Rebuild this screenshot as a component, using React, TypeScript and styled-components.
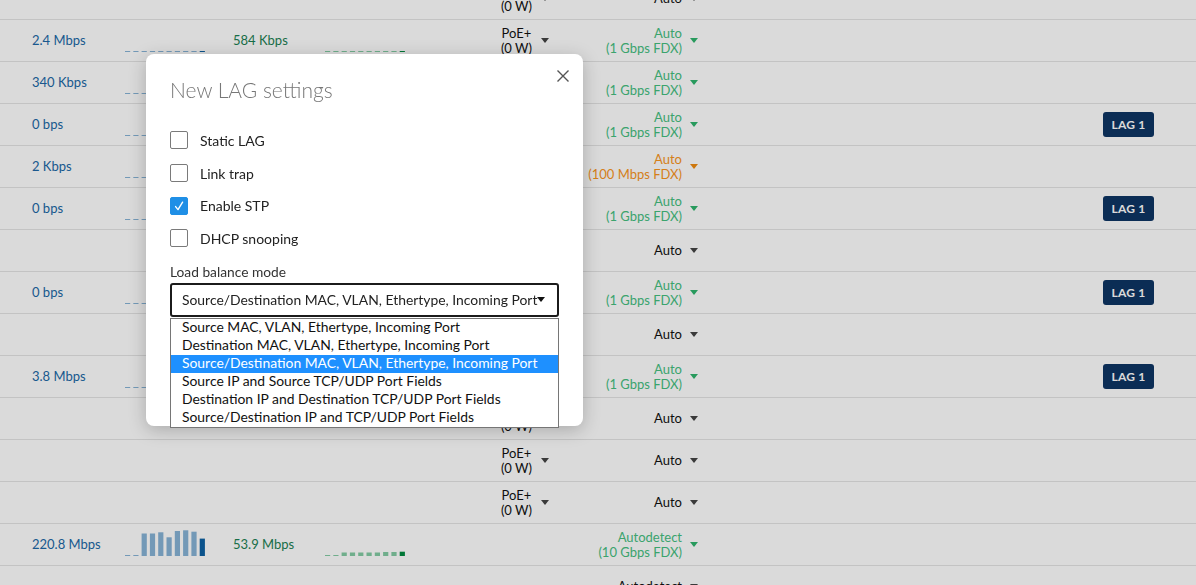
import React from "react";
import styled, { createGlobalStyle } from "styled-components";

const GlobalStyle = createGlobalStyle`
  html, body {
    margin: 0;
    padding: 0;
    background: #ffffff;
    overflow: hidden;
    font-family: "Lato", "Noto Sans", sans-serif;
  }
  * { box-sizing: border-box; }
`;

type Tone = "green" | "orange" | "plain";

interface PortRow {
  rx?: string;
  tx?: string;
  rxSpark?: number[];
  txSpark?: number[];
  poe?: boolean;
  speed: string;
  detail?: string;
  tone: Tone;
  lag?: boolean;
}

const flat = [1, 1, 1, 1, 1, 1, 1, 1, 1, 1];

const rows: PortRow[] = [
  { poe: true, speed: "Auto", tone: "plain" },
  { rx: "2.4 Mbps", rxSpark: flat, tx: "584 Kbps", txSpark: flat, poe: true, speed: "Auto", detail: "(1 Gbps FDX)", tone: "green" },
  { rx: "340 Kbps", rxSpark: flat, tx: "112 Kbps", txSpark: flat, poe: true, speed: "Auto", detail: "(1 Gbps FDX)", tone: "green" },
  { rx: "0 bps", rxSpark: flat, tx: "0 bps", txSpark: flat, poe: true, speed: "Auto", detail: "(1 Gbps FDX)", tone: "green", lag: true },
  { rx: "2 Kbps", rxSpark: flat, tx: "1 Kbps", txSpark: flat, poe: true, speed: "Auto", detail: "(100 Mbps FDX)", tone: "orange" },
  { rx: "0 bps", rxSpark: flat, tx: "0 bps", txSpark: flat, poe: true, speed: "Auto", detail: "(1 Gbps FDX)", tone: "green", lag: true },
  { poe: true, speed: "Auto", tone: "plain" },
  { rx: "0 bps", rxSpark: flat, tx: "0 bps", txSpark: flat, poe: true, speed: "Auto", detail: "(1 Gbps FDX)", tone: "green", lag: true },
  { poe: true, speed: "Auto", tone: "plain" },
  { rx: "3.8 Mbps", rxSpark: flat, tx: "1.2 Mbps", txSpark: flat, poe: true, speed: "Auto", detail: "(1 Gbps FDX)", tone: "green", lag: true },
  { poe: true, speed: "Auto", tone: "plain" },
  { poe: true, speed: "Auto", tone: "plain" },
  { poe: true, speed: "Auto", tone: "plain" },
  {
    rx: "220.8 Mbps",
    rxSpark: [1, 1, 22.5, 22.5, 23.7, 18.7, 25, 25.7, 24.3, 17.4],
    tx: "53.9 Mbps",
    txSpark: [1, 1, 3.5, 3.5, 3.5, 3.5, 3.5, 4, 4, 4.3],
    speed: "Autodetect",
    detail: "(10 Gbps FDX)",
    tone: "green",
  },
  { speed: "Autodetect", tone: "plain" },
];

const modes = [
  "Source MAC, VLAN, Ethertype, Incoming Port",
  "Destination MAC, VLAN, Ethertype, Incoming Port",
  "Source/Destination MAC, VLAN, Ethertype, Incoming Port",
  "Source IP and Source TCP/UDP Port Fields",
  "Destination IP and Destination TCP/UDP Port Fields",
  "Source/Destination IP and TCP/UDP Port Fields",
];

const toneColor: Record<Tone, string> = {
  green: "#45c07f",
  orange: "#f9951d",
  plain: "#111111",
};

const arrowColor: Record<Tone, string> = {
  green: "#2fb56d",
  orange: "#f08c10",
  plain: "#444444",
};

const Table = styled.div`
  margin-top: -22px;
  display: flex;
  flex-direction: column;
  font-size: 13px;
`;

const Row = styled.div`
  display: grid;
  grid-template-columns: 93px 108px 92px 80px 144px 149px 1fr;
  align-items: center;
  height: 42px;
  padding-left: 32px;
  border-bottom: 1px solid #e5e5e5;
`;

const Rate = styled.div<{ $kind: "rx" | "tx" }>`
  font-size: 13px;
  line-height: 16px;
  margin-top: -2px;
  color: ${({ $kind }) => ($kind === "rx" ? "#2068a6" : "#1b8154")};
`;

const SparkCell = styled.div`
  align-self: end;
  margin-bottom: 9px;
  height: 28px;
  line-height: 0;
`;

const PoeCell = styled.div`
  display: flex;
  align-items: center;
  justify-content: flex-end;
  gap: 9px;
`;

const PoeText = styled.div`
  font-size: 13px;
  line-height: 15px;
  color: #111;
  text-align: center;
`;

const SpeedCell = styled.div`
  display: flex;
  align-items: center;
  justify-content: flex-end;
  gap: 8px;
`;

const SpeedText = styled.div<{ $tone: Tone }>`
  font-size: 13px;
  line-height: 15px;
  text-align: right;
  color: ${({ $tone }) => toneColor[$tone]};
`;

const Caret = styled.span<{ $color: string }>`
  flex: none;
  width: 0;
  height: 0;
  border-left: 4px solid transparent;
  border-right: 4px solid transparent;
  border-top: 5px solid ${({ $color }) => $color};
`;

const LagCell = styled.div`
  display: flex;
  justify-content: flex-end;
  padding-right: 42px;
`;

const LagBadge = styled.span`
  display: inline-flex;
  align-items: center;
  justify-content: center;
  width: 51px;
  height: 25px;
  border-radius: 3px;
  background: #0e3564;
  color: #ffffff;
  font-size: 12px;
  font-weight: 700;
  letter-spacing: 0.2px;
`;

const Backdrop = styled.div`
  position: fixed;
  inset: 0;
  background: rgba(0, 0, 0, 0.145);
  z-index: 10;
`;

const Modal = styled.div`
  position: fixed;
  left: 146px;
  top: 54px;
  width: 437px;
  height: 372px;
  padding: 23px 24px 0 24px;
  background: #ffffff;
  border-radius: 8px;
  box-shadow: 0 4px 18px rgba(0, 0, 0, 0.22);
  z-index: 20;
  display: flex;
  flex-direction: column;
`;

const Close = styled.button`
  position: absolute;
  top: 16px;
  right: 14px;
  width: 12px;
  height: 12px;
  padding: 0;
  border: none;
  background: none;
  cursor: pointer;
  display: flex;
`;

const Title = styled.h2`
  margin: 0 0 22px 0;
  font-size: 21px;
  line-height: 25px;
  font-weight: 300;
  color: #777777;
`;

const CheckList = styled.div`
  display: flex;
  flex-direction: column;
`;

const CheckRow = styled.label`
  display: flex;
  align-items: center;
  gap: 12px;
  height: 32.7px;
  font-size: 14px;
  color: #222;
`;

const Box = styled.span<{ $checked: boolean }>`
  width: 18px;
  height: 18px;
  border-radius: 2px;
  border: 1px solid ${({ $checked }) => ($checked ? "#1f8fe6" : "#7a7a7a")};
  background: ${({ $checked }) => ($checked ? "#1f8fe6" : "#ffffff")};
  display: flex;
  align-items: center;
  justify-content: center;
`;

const FieldLabel = styled.div`
  margin-top: 9px;
  font-size: 13.75px;
  line-height: 16px;
  color: #333;
`;

const SelectWrap = styled.div`
  position: relative;
  margin-top: 3px;
  width: 389px;
`;

const SelectBox = styled.div`
  height: 34px;
  border: 2px solid #1b1b1b;
  border-radius: 3px;
  padding: 0 12px 0 10px;
  display: flex;
  align-items: center;
  justify-content: space-between;
  font-size: 13.9px;
  color: #222;
  white-space: nowrap;
`;

const SelectCaret = styled.span`
  width: 0;
  height: 0;
  border-left: 4px solid transparent;
  border-right: 4px solid transparent;
  border-top: 5px solid #111;
`;

const Dropdown = styled.ul`
  position: absolute;
  top: calc(100% + 1px);
  left: 0;
  width: 389px;
  margin: 0;
  padding: 0;
  list-style: none;
  background: #ffffff;
  border: 1px solid #767676;
`;

const Option = styled.li<{ $selected: boolean }>`
  height: 18px;
  line-height: 16px;
  padding-left: 11px;
  font-size: 13.9px;
  white-space: nowrap;
  color: ${({ $selected }) => ($selected ? "#ffffff" : "#111")};
  background: ${({ $selected }) => ($selected ? "#1e90ff" : "transparent")};
`;

const Spark = ({ values, light, dark }: { values: number[]; light: string; dark: string }) => (
  <svg width="80" height="28" viewBox="0 0 80 28">
    {values.map((v, i) => (
      <rect
        key={i}
        x={i * 8.3}
        y={28 - v}
        width={5.2}
        height={v}
        fill={i === values.length - 1 ? dark : light}
      />
    ))}
  </svg>
);

const CheckMark = () => (
  <svg width="14" height="14" viewBox="0 0 14 14">
    <path d="M3.6 7.6 L6 10.6 L10.6 3.2" fill="none" stroke="#fff" strokeWidth="1.4" strokeLinecap="round" strokeLinejoin="round" />
  </svg>
);

const options = [
  { label: "Static LAG", checked: false },
  { label: "Link trap", checked: false },
  { label: "Enable STP", checked: true },
  { label: "DHCP snooping", checked: false },
];

export default function App() {
  return (
    <>
      <GlobalStyle />
      <Table>
        {rows.map((r, i) => (
          <Row key={i}>
            <div>{r.rx && <Rate $kind="rx">{r.rx}</Rate>}</div>
            <SparkCell>{r.rxSpark && <Spark values={r.rxSpark} light="#87b3d6" dark="#0d62a4" />}</SparkCell>
            <div>{r.tx && <Rate $kind="tx">{r.tx}</Rate>}</div>
            <SparkCell>{r.txSpark && <Spark values={r.txSpark} light="#84cca4" dark="#008a40" />}</SparkCell>
            <PoeCell>
              {r.poe && (
                <>
                  <PoeText>
                    PoE+
                    <br />
                    (0 W)
                  </PoeText>
                  <Caret $color="#444" />
                </>
              )}
            </PoeCell>
            <SpeedCell>
              <SpeedText $tone={r.tone}>
                {r.speed}
                {r.detail && (
                  <>
                    <br />
                    {r.detail}
                  </>
                )}
              </SpeedText>
              <Caret $color={arrowColor[r.tone]} />
            </SpeedCell>
            <LagCell>{r.lag && <LagBadge>LAG 1</LagBadge>}</LagCell>
          </Row>
        ))}
      </Table>
      <Backdrop />
      <Modal>
        <Close aria-label="Close">
          <svg width="12" height="12" viewBox="0 0 12 12">
            <path d="M0.5 0.5 L11.5 11.5 M11.5 0.5 L0.5 11.5" stroke="#555" strokeWidth="1.4" />
          </svg>
        </Close>
        <Title>New LAG settings</Title>
        <CheckList>
          {options.map((o) => (
            <CheckRow key={o.label}>
              <Box $checked={o.checked}>{o.checked && <CheckMark />}</Box>
              {o.label}
            </CheckRow>
          ))}
        </CheckList>
        <FieldLabel>Load balance mode</FieldLabel>
        <SelectWrap>
          <SelectBox>
            <span>{modes[2]}</span>
            <SelectCaret />
          </SelectBox>
          <Dropdown>
            {modes.map((m, i) => (
              <Option key={m} $selected={i === 2}>
                {m}
              </Option>
            ))}
          </Dropdown>
        </SelectWrap>
      </Modal>
    </>
  );
}
